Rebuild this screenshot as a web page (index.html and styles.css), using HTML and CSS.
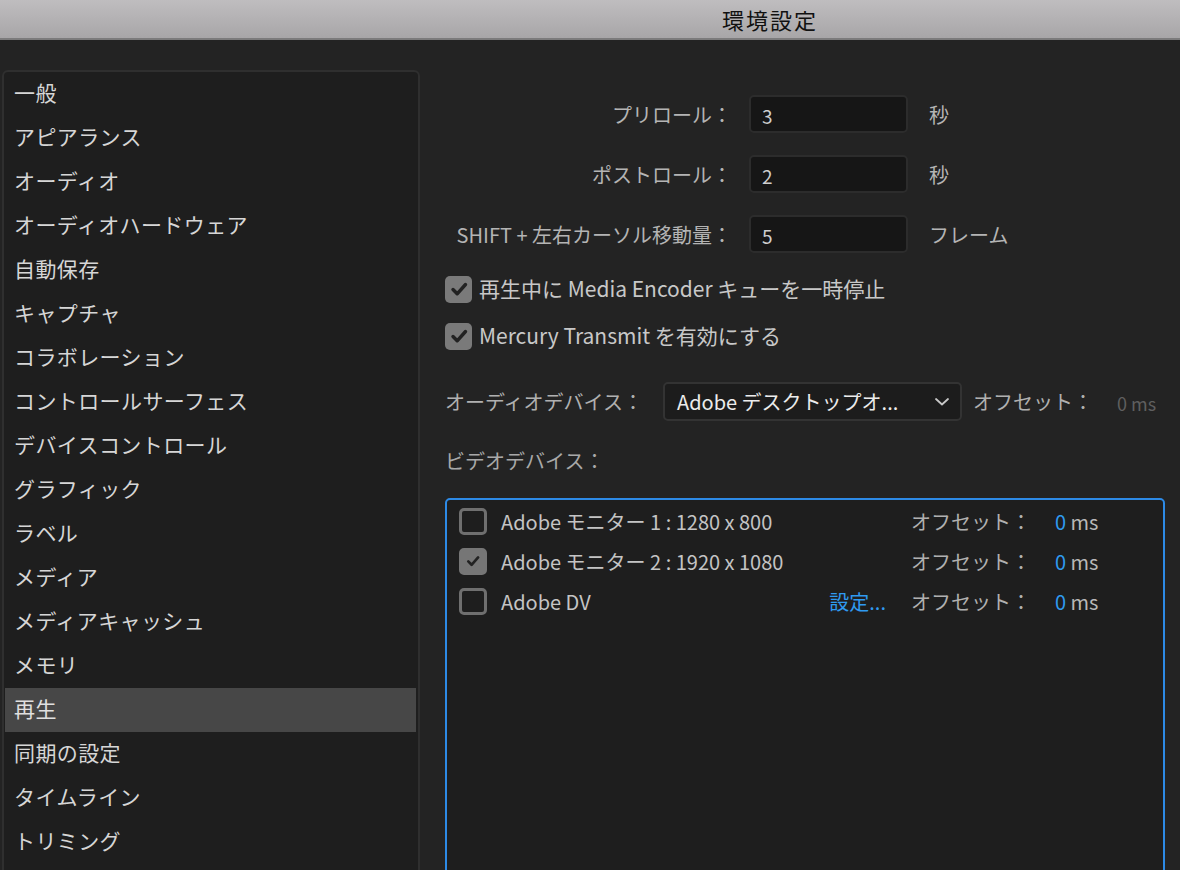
FILE: index.html
```html
<!DOCTYPE html>
<html lang="ja">
<head>
<meta charset="utf-8">
<title>環境設定</title>
<link rel="stylesheet" href="styles.css">
</head>
<body>
<header class="titlebar"><span class="title">環境設定</span></header>
<div class="main">
  <nav class="sidebar">
    <ul class="nav-list">
      <li class="nav-item">一般</li>
      <li class="nav-item">アピアランス</li>
      <li class="nav-item">オーディオ</li>
      <li class="nav-item">オーディオハードウェア</li>
      <li class="nav-item">自動保存</li>
      <li class="nav-item">キャプチャ</li>
      <li class="nav-item">コラボレーション</li>
      <li class="nav-item">コントロールサーフェス</li>
      <li class="nav-item">デバイスコントロール</li>
      <li class="nav-item">グラフィック</li>
      <li class="nav-item">ラベル</li>
      <li class="nav-item">メディア</li>
      <li class="nav-item">メディアキャッシュ</li>
      <li class="nav-item">メモリ</li>
      <li class="nav-item is-selected">再生</li>
      <li class="nav-item">同期の設定</li>
      <li class="nav-item">タイムライン</li>
      <li class="nav-item">トリミング</li>
    </ul>
  </nav>
  <section class="content">
    <div class="field-grid">
      <span class="field-label">プリロール：</span><span class="text-input">3</span><span class="unit">秒</span>
      <span class="field-label">ポストロール：</span><span class="text-input">2</span><span class="unit">秒</span>
      <span class="field-label">SHIFT + 左右カーソル移動量：</span><span class="text-input">5</span><span class="unit">フレーム</span>
    </div>
    <div class="check-row first">
      <span class="checkbox is-checked"><svg viewBox="0 0 26 26" width="26" height="26"><path d="M7 13.5 L11.2 17.8 L19.5 8.5" fill="none" stroke="#222" stroke-width="3.4" stroke-linecap="round" stroke-linejoin="round"/></svg></span>
      <span class="check-text">再生中に Media Encoder キューを一時停止</span>
    </div>
    <div class="check-row">
      <span class="checkbox is-checked"><svg viewBox="0 0 26 26" width="26" height="26"><path d="M7 13.5 L11.2 17.8 L19.5 8.5" fill="none" stroke="#222" stroke-width="3.4" stroke-linecap="round" stroke-linejoin="round"/></svg></span>
      <span class="check-text">Mercury Transmit を有効にする</span>
    </div>
    <div class="audio-row">
      <span class="audio-label">オーディオデバイス：</span>
      <span class="dropdown">
        <span class="dropdown-text">Adobe デスクトップオ...</span>
        <svg class="chevron" viewBox="0 0 16 10" width="16" height="10"><path d="M2 2 L8 7.5 L14 2" fill="none" stroke="#c8c8c8" stroke-width="1.8" stroke-linecap="round" stroke-linejoin="round"/></svg>
      </span>
      <span class="offset-label">オフセット：</span>
      <span class="offset-muted">0 ms</span>
    </div>
    <div class="video-label">ビデオデバイス：</div>
    <div class="device-list">
      <div class="device-row">
        <span class="box"></span>
        <span class="device-name">Adobe モニター 1 : 1280 x 800</span>
        <span class="device-setting"></span>
        <span class="device-offset">オフセット：</span>
        <span class="device-value"><span class="num">0</span> ms</span>
      </div>
      <div class="device-row">
        <span class="box is-checked"><svg viewBox="0 0 28 28" width="28" height="28"><path d="M8 14.5 L12.2 18.8 L20.5 9.5" fill="none" stroke="#222" stroke-width="3.4" stroke-linecap="round" stroke-linejoin="round"/></svg></span>
        <span class="device-name">Adobe モニター 2 : 1920 x 1080</span>
        <span class="device-setting"></span>
        <span class="device-offset">オフセット：</span>
        <span class="device-value"><span class="num">0</span> ms</span>
      </div>
      <div class="device-row">
        <span class="box"></span>
        <span class="device-name">Adobe DV</span>
        <span class="device-setting">設定...</span>
        <span class="device-offset">オフセット：</span>
        <span class="device-value"><span class="num">0</span> ms</span>
      </div>
    </div>
  </section>
</div>
</body>
</html>
```
FILE: styles.css
```css
* { box-sizing: border-box; }

html, body {
  margin: 0;
  padding: 0;
}

body {
  width: 1180px;
  height: 870px;
  overflow: hidden;
  background: #232323;
  font-family: "Noto Sans CJK JP", "Noto Sans", sans-serif;
  color: #c4c4c4;
}

.titlebar {
  height: 40px;
  background: linear-gradient(#bfbdbf, #a8a6a8);
  border-bottom: 2px solid #7c7b7c;
  display: flex;
  align-items: center;
  justify-content: center;
  padding-left: 360px;
}

.title {
  font-size: 22px;
  color: #111;
  letter-spacing: 2px;
}

.main {
  display: flex;
  height: 900px;
}

.sidebar {
  margin: 30px 0 0 2px;
  width: 418px;
  border: 2px solid #2f2f2f;
  border-bottom: none;
  border-radius: 6px 6px 0 0;
  background: #1e1e1e;
  padding: 0 2px 0 1px;
}

.nav-list {
  list-style: none;
  margin: 0;
  padding: 0;
}

.nav-item {
  height: 44px;
  display: flex;
  align-items: center;
  padding: 0 0 4px 9px;
  font-size: 21px;
  letter-spacing: 0.4px;
  color: #d6d6d6;
}

.nav-item.is-selected {
  background: #474747;
  color: #e0e0e0;
}

.content {
  flex: 1;
  margin-left: 25px;
  padding-top: 55px;
}

.field-grid {
  display: grid;
  grid-template-columns: 287px 159px auto;
  grid-auto-rows: 38px;
  column-gap: 17px;
  row-gap: 22px;
  align-items: center;
}

.field-label {
  text-align: right;
  font-size: 20px;
  color: #b4b4b4;
  white-space: nowrap;
}

.text-input {
  height: 38px;
  background: #161616;
  border: 2px solid #2c2c2c;
  border-radius: 5px;
  padding: 3px 0 0 11px;
  font-size: 19px;
  color: #cfcfcf;
  display: flex;
  align-items: center;
}

.unit {
  padding-left: 4px;
  font-size: 20px;
  color: #b4b4b4;
}

.check-row {
  display: flex;
  align-items: center;
  height: 28px;
  margin-top: 19px;
  gap: 7px;
}

.check-row.first {
  margin-top: 22px;
}

.checkbox {
  width: 27px;
  height: 27px;
  border-radius: 5px;
  background: #7a7a7a;
  display: flex;
  align-items: center;
  justify-content: center;
}

.check-text {
  font-size: 21px;
  color: #c8c8c8;
  padding-bottom: 2px;
}

.audio-row {
  display: flex;
  align-items: center;
  margin-top: 32px;
  height: 39px;
}

.audio-label {
  font-size: 20px;
  color: #b0b0b0;
  width: 218px;
}

.dropdown {
  width: 299px;
  height: 39px;
  background: #1c1c1c;
  border: 2px solid #333;
  border-radius: 5px;
  display: flex;
  align-items: center;
  justify-content: space-between;
  padding: 0 10px 0 12px;
}

.dropdown-text {
  font-size: 20px;
  color: #ececec;
}

.chevron {
  display: block;
}

.offset-label {
  margin-left: 11px;
  width: 144px;
  font-size: 20px;
  color: #b0b0b0;
}

.offset-muted {
  font-size: 18px;
  color: #5f5f5f;
  padding-top: 2px;
}

.video-label {
  margin-top: 26px;
  height: 28px;
  line-height: 28px;
  font-size: 20px;
  color: #a8a8a8;
}

.device-list {
  margin-top: 23px;
  width: 720px;
  height: 420px;
  border: 2px solid #2d8ae6;
  border-radius: 5px;
  background: #1e1e1e;
  padding: 1px 0 0 12px;
}

.device-row {
  display: flex;
  align-items: center;
  height: 40px;
}

.box {
  width: 28px;
  height: 27px;
  border: 3px solid #6f6f6f;
  border-radius: 5px;
  margin-right: 14px;
  display: flex;
  align-items: center;
  justify-content: center;
}

.box.is-checked {
  background: #767676;
  border-color: #767676;
}

.device-name {
  flex: 1;
  font-size: 20px;
  color: #c4c4c4;
}

.device-setting {
  width: 80px;
  text-align: right;
  font-size: 20px;
  color: #2f9af0;
  margin-right: 25px;
}

.device-offset {
  width: 144px;
  font-size: 20px;
  color: #b0b0b0;
}

.device-value {
  width: 108px;
  font-size: 20px;
  color: #b8b8b8;
}

.device-value .num {
  color: #2f9af0;
}
```
